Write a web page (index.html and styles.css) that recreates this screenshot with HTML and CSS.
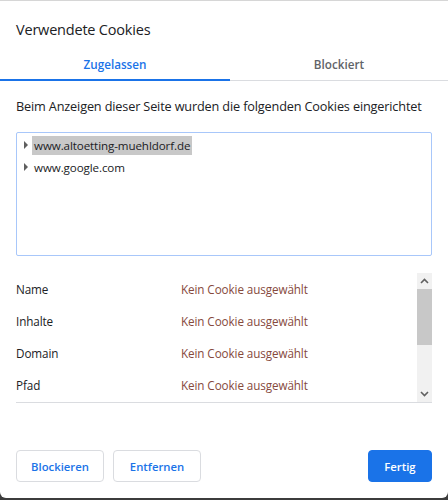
FILE: index.html
```html
<!DOCTYPE html>
<html lang="de">
<head>
    <meta charset="UTF-8">
    <title>Verwendete Cookies</title>
    <link rel="stylesheet" href="styles.css">
</head>
<body>
    <div class="dialog">
        <h1 class="title">Verwendete Cookies</h1>

        <div class="tabs">
            <div class="tab active">Zugelassen</div>
            <div class="tab">Blockiert</div>
        </div>

        <div class="content">
            <p class="intro">Beim Anzeigen dieser Seite wurden die folgenden Cookies eingerichtet</p>

            <div class="tree">
                <div class="node">
                    <span class="arrow"></span>
                    <span class="label selected">www.altoetting-muehldorf.de</span>
                </div>
                <div class="node">
                    <span class="arrow"></span>
                    <span class="label">www.google.com</span>
                </div>
            </div>

            <div class="details">
                <div class="rows">
                    <div class="row"><span class="key">Name</span><span class="val">Kein Cookie ausgewählt</span></div>
                    <div class="row"><span class="key">Inhalte</span><span class="val">Kein Cookie ausgewählt</span></div>
                    <div class="row"><span class="key">Domain</span><span class="val">Kein Cookie ausgewählt</span></div>
                    <div class="row"><span class="key">Pfad</span><span class="val">Kein Cookie ausgewählt</span></div>
                </div>
                <div class="scrollbar">
                    <svg class="sb-arrow" width="9" height="6" viewBox="0 0 9 6"><path d="M1 5 L4.5 1.5 L8 5" fill="none" stroke="#606060" stroke-width="1.6"/></svg>
                    <div class="thumb"></div>
                    <div class="track"></div>
                    <svg class="sb-arrow" width="9" height="6" viewBox="0 0 9 6"><path d="M1 1 L4.5 4.5 L8 1" fill="none" stroke="#606060" stroke-width="1.6"/></svg>
                </div>
            </div>
        </div>

        <div class="buttons">
            <button class="btn">Blockieren</button>
            <button class="btn">Entfernen</button>
            <button class="btn primary">Fertig</button>
        </div>
    </div>
</body>
</html>
```

FILE: styles.css
```css
html, body {
    margin: 0;
    height: 100%;
    background: #3c3c3c;
}

body {
    font-family: "Open Sans", "Noto Sans", Arial, sans-serif;
    color: #202124;
}

/* === Dialog === */
.dialog {
    background: #ffffff;
    border-top: 1px solid #d6d6d6;
    border-radius: 0 0 6px 6px;
    height: 498px;
    box-sizing: border-box;
    display: flex;
    flex-direction: column;
}

.title {
    font-size: 14.5px;
    font-weight: normal;
    margin: 0;
    padding: 18px 16px 0;
    height: 24px;
    line-height: 22px;
    letter-spacing: -0.2px;
}

/* === Tabs === */
.tabs {
    display: flex;
    margin-top: 7px;
    border-bottom: 1px solid #dadce0;
}

.tab {
    flex: 1;
    text-align: center;
    font-size: 11.7px;
    font-weight: 600;
    color: #5f6368;
    height: 30px;
    line-height: 28px;
    box-sizing: border-box;
}

.tab.active {
    flex: 0 0 230px;
    color: #1a73e8;
    border-bottom: 2px solid #1a73e8;
    margin-bottom: -1px;
    height: 31px;
}

/* === Content === */
.content {
    padding: 0 16px;
    flex: 1;
}

.intro {
    font-size: 12.7px;
    margin: 16px 0 17px;
    line-height: 18px;
    letter-spacing: -0.15px;
}

.tree {
    border: 1px solid #a8c7fa;
    border-radius: 2px;
    height: 124px;
    box-sizing: border-box;
    padding: 1px 0 0 4px;
}

.node {
    display: flex;
    align-items: center;
    height: 22px;
    font-size: 11.6px;
    letter-spacing: -0.1px;
}

.arrow {
    width: 0;
    height: 0;
    border-top: 4px solid transparent;
    border-bottom: 4px solid transparent;
    border-left: 4px solid #5f5f5f;
    margin: 0 4px 0 3px;
}

.label {
    padding: 1px 2px 1px 2px;
    line-height: 17px;
}

.label.selected {
    background: #c8c8c8;
}

/* === Details === */
.details {
    display: flex;
    margin-top: 17px;
    height: 130px;
    border-bottom: 1px solid #dadce0;
    box-sizing: border-box;
}

.rows {
    flex: 1;
}

.row {
    display: flex;
    height: 32px;
    align-items: center;
    font-size: 11.7px;
    letter-spacing: -0.1px;
}

.key {
    width: 165px;
}

.val {
    color: #86493c;
}

.scrollbar {
    width: 15px;
    background: #f1f1f1;
    display: flex;
    flex-direction: column;
    align-items: center;
}

.sb-arrow {
    margin: 5px 0;
    flex: none;
}

.thumb {
    width: 15px;
    height: 56px;
    background: #c8c8c8;
}

.track {
    flex: 1;
}

/* === Buttons === */
.buttons {
    display: flex;
    gap: 9px;
    padding: 0 16px 16px;
}

.btn {
    font-family: inherit;
    font-size: 11.3px;
    font-weight: 600;
    width: 88px;
    height: 32px;
    padding: 0;
    border: 1px solid #dadce0;
    border-radius: 4px;
    background: #ffffff;
    color: #1a73e8;
}

.btn.primary {
    margin-left: auto;
    background: #1a73e8;
    border-color: #1a73e8;
    color: #ffffff;
    width: 64px;
}
```
